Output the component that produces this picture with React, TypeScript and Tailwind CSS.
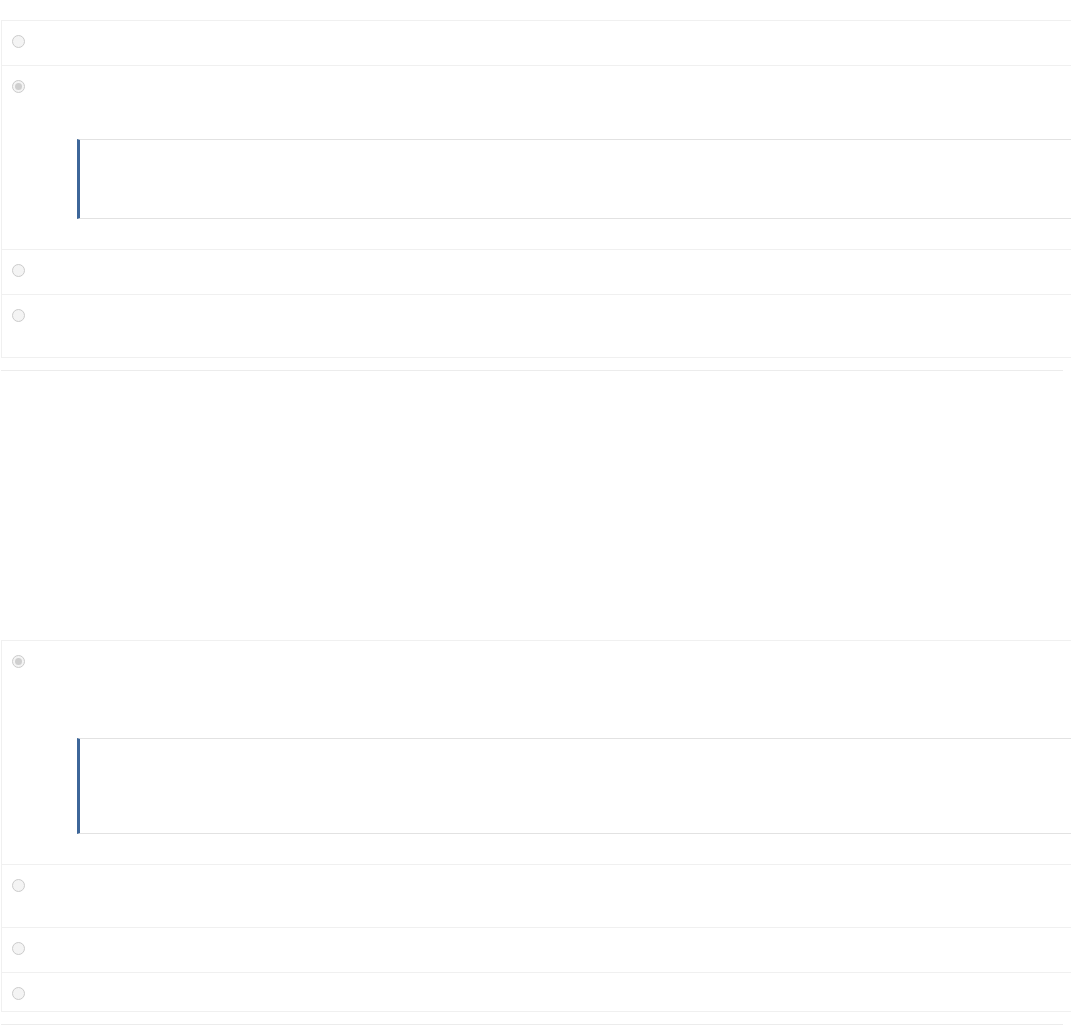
const Radio = ({ checked = false }: { checked?: boolean }) => (
  <span className="flex h-[13px] w-[13px] shrink-0 items-center justify-center rounded-full border border-[#cbcbcb] bg-[#f4f4f4]">
    {checked && <span className="h-[7px] w-[7px] rounded-full bg-[#cfcfcf]" />}
  </span>
);

type Option = { h: string; checked?: boolean; quote?: string };

const Quote = ({ className }: { className: string }) => (
  <div
    className={`ml-[65px] border-y border-l-[3px] border-y-[#e2e2e2] border-l-[#3d6699] bg-white ${className}`}
  />
);

const OptionRow = ({ opt, last }: { opt: Option; last: boolean }) => (
  <li className={`${opt.h} ${last ? "" : "border-b border-[#f0f0f0]"} pl-[10px] pt-[14px]`}>
    <Radio checked={opt.checked} />
    {opt.quote && <Quote className={opt.quote} />}
  </li>
);

const Question = ({ options }: { options: Option[] }) => (
  <div>
    <ul className="ml-px w-[1070px] border-y border-l border-[#f0f0f0]">
      {options.map((o, i) => (
        <OptionRow key={i} opt={o} last={i === options.length - 1} />
      ))}
    </ul>
    <hr className="ml-px mt-3 w-[1062px] border-t border-[#ececec]" />
  </div>
);

export default function App() {
  const first: Option[] = [
    { h: "h-[45px]" },
    { h: "h-[184px]", checked: true, quote: "mt-[46px] h-[80px]" },
    { h: "h-[45px]" },
    { h: "h-[62px]" },
  ];
  const second: Option[] = [
    { h: "h-[224px]", checked: true, quote: "mt-[70px] h-[96px]" },
    { h: "h-[63px]" },
    { h: "h-[45px]" },
    { h: "h-[38px]" },
  ];

  return (
    <div className="min-h-screen bg-white pt-5 font-['Open_Sans',sans-serif]">
      <Question options={first} />
      <div className="h-[269px]" />
      <Question options={second} />
    </div>
  );
}
